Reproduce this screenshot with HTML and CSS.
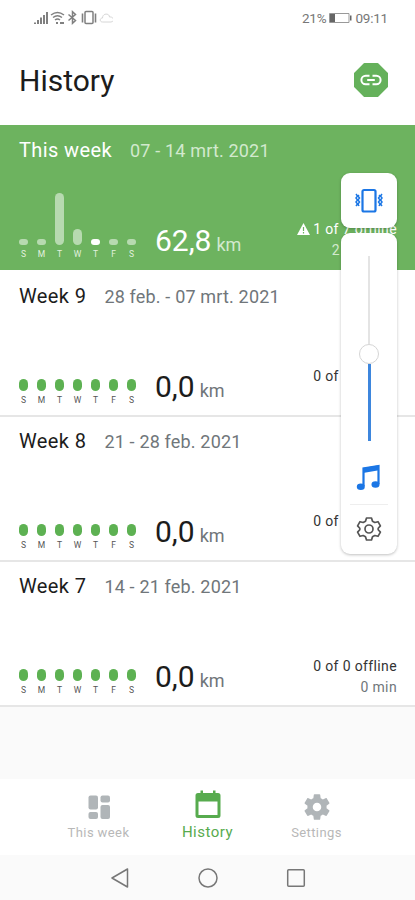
FILE: index.html
```html
<!DOCTYPE html>
<html lang="en">
<head>
  <meta charset="utf-8">
  <title>History</title>
  <link rel="stylesheet" href="styles.css">
</head>
<body>
  <div class="status-bar">
    <div class="status-icons">
      <svg width="80" height="16" viewBox="0 0 80 16" fill="none" stroke="#808080">
        <path d="M2 15v-1.500M5 15v-4M8 15v-6.500M11 15v-9M14 15v-12" stroke-width="2"/>
        <path d="M18 6q6.500-5 13 0M20 8.500q4.500-3.500 9 0M22 11q2.500-2 5 0" stroke-width="1.500"/>
        <path d="M24 13v2M27 14h4" stroke-width="2"/>
        <path d="M35.500 5.500l7 6-3 2.800V2.700l3 2.800-7 6" stroke-width="1.500"/>
        <rect x="52" y="2.500" width="8" height="12" rx="1" stroke-width="1.500"/>
        <path d="M49.500 4.500v9M62.500 4.500v9" stroke-width="1.600"/>
        <path d="M69.500 13c-3 0-3-4 0-4 0-5 7-5 7-1 5-.5 5 5 1.500 5z" stroke="#d6d6d6"/>
      </svg>
    </div>
    <div class="status-right">
      <span>21%</span>
      <svg width="23" height="10" viewBox="0 0 23 10">
        <path d="M.5.5h19.500v9H.5z" fill="#fff" stroke="#999"/>
        <path d="M1 1h5v8H1z" fill="#666"/>
        <path d="M21 2.500h1.500v5H21z" fill="#666"/>
      </svg>
      <span class="clock">09:11</span>
    </div>
  </div>

  <header class="header">
    <h1>History</h1>
    <svg width="34" height="34" viewBox="0 0 34 34">
      <path d="M10.500 1h13L33 10.500v13L23.500 33h-13L1 23.500v-13z" fill="#65b15b" stroke="#65b15b" stroke-width="2" stroke-linejoin="round"/>
      <path d="M15.500 12.700h-3.800a4.300 4.300 0 0 0 0 8.600h3.800M18.500 12.700h3.800a4.300 4.300 0 0 1 0 8.600h-3.800M13.200 17h7.600" fill="none" stroke="#fff" stroke-width="2"/>
    </svg>
  </header>

  <main class="weeks">
    <section class="week current">
      <div class="week-head"><h2>This week</h2><span>07 - 14 mrt. 2021</span></div>
      <div class="week-body">
        <div class="chart">
          <div class="day"><i style="height:6px"></i><b>S</b></div>
          <div class="day"><i style="height:6px"></i><b>M</b></div>
          <div class="day"><i style="height:52px"></i><b>T</b></div>
          <div class="day"><i style="height:16px"></i><b>W</b></div>
          <div class="day today"><i style="height:6px"></i><b>T</b></div>
          <div class="day"><i style="height:6px"></i><b>F</b></div>
          <div class="day"><i style="height:6px"></i><b>S</b></div>
        </div>
        <div class="distance"><span>62,8</span><small>km</small></div>
        <div class="stats">
          <div class="offline"><svg width="13" height="12" viewBox="0 0 13 12"><path d="M6.500 0L13 12H0z" fill="#fff"/><path d="M6.500 4v4M6.500 9v1.500" stroke="#6db35f" stroke-width="1.200"/></svg>1 of 7 offline</div>
          <div class="time">2 h 13 min</div>
        </div>
      </div>
    </section>

    <section class="week">
      <div class="week-head"><h2>Week 9</h2><span>28 feb. - 07 mrt. 2021</span></div>
      <div class="week-body">
        <div class="chart">
          <div class="day"><i></i><b>S</b></div>
          <div class="day"><i></i><b>M</b></div>
          <div class="day"><i></i><b>T</b></div>
          <div class="day"><i></i><b>W</b></div>
          <div class="day"><i></i><b>T</b></div>
          <div class="day"><i></i><b>F</b></div>
          <div class="day"><i></i><b>S</b></div>
        </div>
        <div class="distance"><span>0,0</span><small>km</small></div>
        <div class="stats"><div class="offline">0 of 0 offline</div><div class="time">0 min</div></div>
      </div>
    </section>

    <section class="week">
      <div class="week-head"><h2>Week 8</h2><span>21 - 28 feb. 2021</span></div>
      <div class="week-body">
        <div class="chart">
          <div class="day"><i></i><b>S</b></div>
          <div class="day"><i></i><b>M</b></div>
          <div class="day"><i></i><b>T</b></div>
          <div class="day"><i></i><b>W</b></div>
          <div class="day"><i></i><b>T</b></div>
          <div class="day"><i></i><b>F</b></div>
          <div class="day"><i></i><b>S</b></div>
        </div>
        <div class="distance"><span>0,0</span><small>km</small></div>
        <div class="stats"><div class="offline">0 of 0 offline</div><div class="time">0 min</div></div>
      </div>
    </section>

    <section class="week">
      <div class="week-head"><h2>Week 7</h2><span>14 - 21 feb. 2021</span></div>
      <div class="week-body">
        <div class="chart">
          <div class="day"><i></i><b>S</b></div>
          <div class="day"><i></i><b>M</b></div>
          <div class="day"><i></i><b>T</b></div>
          <div class="day"><i></i><b>W</b></div>
          <div class="day"><i></i><b>T</b></div>
          <div class="day"><i></i><b>F</b></div>
          <div class="day"><i></i><b>S</b></div>
        </div>
        <div class="distance"><span>0,0</span><small>km</small></div>
        <div class="stats"><div class="offline">0 of 0 offline</div><div class="time">0 min</div></div>
      </div>
    </section>
  </main>

  <nav class="tabs">
    <div class="tab">
      <svg width="32" height="32" viewBox="0 0 32 32" fill="#b0b5b8">
        <rect x="5.500" y="4.500" width="9.500" height="14" rx="2"/>
        <rect x="17.500" y="4.500" width="9.500" height="7" rx="2"/>
        <rect x="5.500" y="21" width="9.500" height="7" rx="2"/>
        <rect x="17.500" y="14" width="9.500" height="14" rx="2"/>
      </svg>
      <span>This week</span>
    </div>
    <div class="tab active">
      <svg width="32" height="32" viewBox="0 0 32 32">
        <path d="M6 3h2.500V0.500H11V3h10V0.500h2.500V3H26q2.500 0 2.500 2.500v20Q28.500 28 26 28H6q-2.500 0-2.500-2.500v-20Q3.500 3 6 3zM6.500 11.500v13.500h19V11.500z" fill="#57ab4e" fill-rule="evenodd"/>
      </svg>
      <span>History</span>
    </div>
    <div class="tab">
      <svg width="32" height="32" viewBox="0 0 24 24">
        <path fill="#b0b5b8" d="M19.140 12.940c.04-.3.06-.61.06-.94 0-.32-.02-.64-.07-.94l2.030-1.580c.18-.14.23-.41.12-.61l-1.920-3.320c-.12-.22-.37-.29-.59-.22l-2.390.96c-.5-.38-1.030-.7-1.620-.94l-.36-2.540c-.04-.24-.24-.41-.48-.41h-3.840c-.24 0-.43.17-.47.41l-.36 2.540c-.59.24-1.130.57-1.620.94l-2.390-.96c-.22-.08-.47 0-.59.22L2.740 8.870c-.12.210-.08.470.12.610l2.030 1.580c-.05.300-.09.630-.09.940s.02.640.07.940l-2.030 1.580c-.18.140-.23.410-.12.610l1.920 3.320c.12.220.37.290.59.220l2.390-.96c.5.380 1.030.7 1.620.94l.36 2.540c.05.240.24.410.48.410h3.840c.24 0 .44-.17.470-.41l.36-2.540c.59-.24 1.130-.56 1.620-.94l2.390.96c.22.080.47 0 .59-.22l1.920-3.320c.12-.22.07-.47-.12-.61zM12 15.200a3.200 3.200 0 1 1 0-6.400 3.200 3.200 0 0 1 0 6.400z"/>
      </svg>
      <span>Settings</span>
    </div>
  </nav>

  <div class="system-nav">
    <svg width="20" height="20" viewBox="0 0 20 20"><path d="M17.500 1v18L2 10z"/></svg>
    <svg width="20" height="20" viewBox="0 0 20 20"><circle cx="10" cy="10" r="9"/></svg>
    <svg width="20" height="20" viewBox="0 0 20 20"><rect x="1.700" y="1.700" width="16.600" height="16.600" rx="1"/></svg>
  </div>

  <!-- volume overlay -->
  <div class="volume">
    <div class="mode">
      <svg width="30" height="26" viewBox="0 0 30 26" fill="none" stroke="#1b76e5">
        <rect x="8.500" y="2" width="13" height="21.500" rx="1.500" stroke-width="2.200"/>
        <path d="M2 6l1.500 2L2 10l1.500 2L2 14l1.500 2L2 18M5 7L4 8l1.500 2L4 12l1.500 2L4 16l1 2M28 6l-1.500 2 1.500 2-1.500 2 1.500 2-1.500 2 1.500 2M25 7l1 1-1.500 2 1.500 2-1.500 2 1.500 2-1 2" stroke-width="1.500"/>
      </svg>
    </div>
    <div class="slider">
      <div class="track"></div>
      <div class="thumb"></div>
      <div class="track filled"></div>
      <svg class="music" width="26" height="28" viewBox="0 0 26 28">
        <path d="M7.500 22V4.500L22.500 2v18" fill="none" stroke="#1b76e5" stroke-width="2.200"/>
        <path d="M7 4l16-2.700v5L7 9z" fill="#1b76e5"/>
        <ellipse cx="4.800" cy="22.800" rx="4" ry="3.300" fill="#1b76e5"/>
        <ellipse cx="19.500" cy="20.500" rx="4" ry="3.300" fill="#1b76e5"/>
      </svg>
      <div class="divider"></div>
      <svg class="gear" width="26" height="26" viewBox="0 0 26 26" fill="none" stroke="#555" stroke-width="1.700" stroke-linejoin="round">
        <path d="M10.500 2h5l1 3.200 2.300 1.300 3.200-.8 2.400 4.200-2.200 2.400v1.400l2.200 2.400-2.400 4.200-3.200-.8-2.300 1.300-1 3.200h-5l-1-3.200-2.300-1.300-3.200.8-2.400-4.200 2.200-2.400v-1.400L1.600 9.900 4 5.700l3.200.8 2.300-1.300z"/>
        <circle cx="13" cy="13" r="4"/>
      </svg>
    </div>
  </div>
</body>
</html>
```

FILE: styles.css
```css
* {
  box-sizing: border-box;
}

body {
  margin: 0;
  width: 415px;
  height: 900px;
  display: flex;
  flex-direction: column;
  position: relative;
  overflow: hidden;
  background-color: #fafafa;
  color: #1c1c1c;
  font-family: Roboto, "Liberation Sans", sans-serif;
}

svg {
  display: block;
  flex: none;
}

h1, h2 {
  margin: 0;
  font-weight: normal;
}

.status-bar {
  height: 36px;
  padding: 0 27px 0 33px;
  display: flex;
  align-items: center;
  justify-content: space-between;
  background-color: #fff;
}

.status-icons {
  padding-bottom: 2px;
}

.status-right {
  display: flex;
  align-items: center;
  gap: 3px;
  font-size: 13.500px;
  letter-spacing: -0.2px;
  color: #777;
}

.header {
  height: 89px;
  padding: 0 27px 1px 19px;
  display: flex;
  align-items: center;
  justify-content: space-between;
  background-color: #fff;
}

.header h1 {
  font-size: 30px;
  line-height: 34px;
  padding-top: 2px;
}

/* Week list */
.weeks {
  border-bottom: 2px solid #e6e6e6;
}

.week {
  height: 145px;
  padding: 11.500px 18px 0 19px;
  background-color: #fff;
  border-top: 2px solid #e6e6e6;
}

.week.current {
  padding-top: 11px;
  background-color: #6db35f;
  color: #fff;
  border-top-color: #6db35f;
}

.current + .week {
  border-top-color: #fff;
}

.week-head {
  height: 24px;
  display: flex;
  align-items: baseline;
  gap: 18px;
}

.week-head h2 {
  font-size: 20px;
  line-height: 24px;
  letter-spacing: 0.4px;
}

.week-head span {
  font-size: 18px;
  color: #70767a;
  letter-spacing: 0.17px;
}

.current .week-head span {
  color: #d2e9ce;
}

.week-body {
  height: 97.500px;
  display: flex;
  align-items: flex-end;
}

.current .week-body {
  height: 97px;
}

.chart {
  display: flex;
  gap: 9px;
  margin-right: 19px;
}

.day {
  width: 9px;
  display: flex;
  flex-direction: column;
  align-items: center;
  justify-content: flex-end;
  gap: 4px;
}

.day i {
  width: 9px;
  height: 12px;
  border-radius: 5px;
  background-color: #5db152;
}

.day b {
  font-size: 8.500px;
  line-height: 10px;
  font-weight: normal;
  color: #555;
}

.current .day i {
  background-color: #b7dab0;
}

.current .today i {
  background-color: #fff;
}

.current .day b {
  color: #e2f1df;
}

.distance {
  display: flex;
  align-items: baseline;
  gap: 5px;
  font-size: 30px;
  line-height: 34px;
  margin-bottom: 1px;
  white-space: nowrap;
}

.distance small {
  font-size: 18px;
  line-height: 20px;
  color: #70767a;
}

.current .distance small {
  color: #d2e9ce;
}

.stats {
  margin-left: auto;
  margin-bottom: -2px;
  font-size: 14px;
  line-height: 20.500px;
  letter-spacing: 0.37px;
  text-align: right;
  color: #333;
  white-space: nowrap;
}

.offline {
  display: flex;
  align-items: center;
  justify-content: flex-end;
  gap: 3px;
}

.time {
  color: #70767a;
}

.current .stats {
  margin-bottom: -1px;
  color: #fff;
}

.current .time {
  color: #d2e9ce;
  letter-spacing: 0;
}

/* Bottom tabs */
.tabs {
  margin-top: auto;
  height: 76px;
  padding: 0 44px;
  display: flex;
  background-color: #fff;
}

.tab {
  flex: 1;
  padding-top: 12px;
  display: flex;
  flex-direction: column;
  align-items: center;
  font-size: 13px;
  letter-spacing: 0.4px;
  color: #b8b8b8;
}

.tab span {
  line-height: 20px;
}

.tab.active {
  padding-top: 11px;
  color: #57ab4e;
  font-size: 15px;
  letter-spacing: 0.5px;
}

.system-nav {
  height: 45px;
  display: flex;
  align-items: center;
  justify-content: center;
  gap: 68px;
  background-color: #fafafa;
}

.system-nav svg {
  fill: none;
  stroke: #777;
  stroke-width: 1.500;
  stroke-linejoin: round;
}

/* Volume overlay */
.volume {
  position: absolute;
  top: 173px;
  right: 18px;
  width: 56px;
  display: flex;
  flex-direction: column;
  gap: 5px;
}

.mode,
.slider {
  display: flex;
  flex-direction: column;
  align-items: center;
  background-color: #fff;
  border-radius: 9px;
  box-shadow: 0 1px 3px rgba(0, 0, 0, 0.25);
}

.mode {
  height: 55px;
  justify-content: center;
}

.slider {
  height: 321px;
  padding-top: 23px;
}

.track {
  width: 2px;
  height: 88px;
  background-color: #e4e4e4;
}

.thumb {
  width: 20px;
  height: 20px;
  border: 1px solid #d5d5d5;
  border-radius: 50%;
}

.track.filled {
  width: 3px;
  height: 77px;
  background-color: #3d86dd;
}

.music {
  margin-top: 23px;
}

.divider {
  width: 38px;
  height: 1px;
  margin: 12px 0 11px;
  background-color: #eee;
}
```
